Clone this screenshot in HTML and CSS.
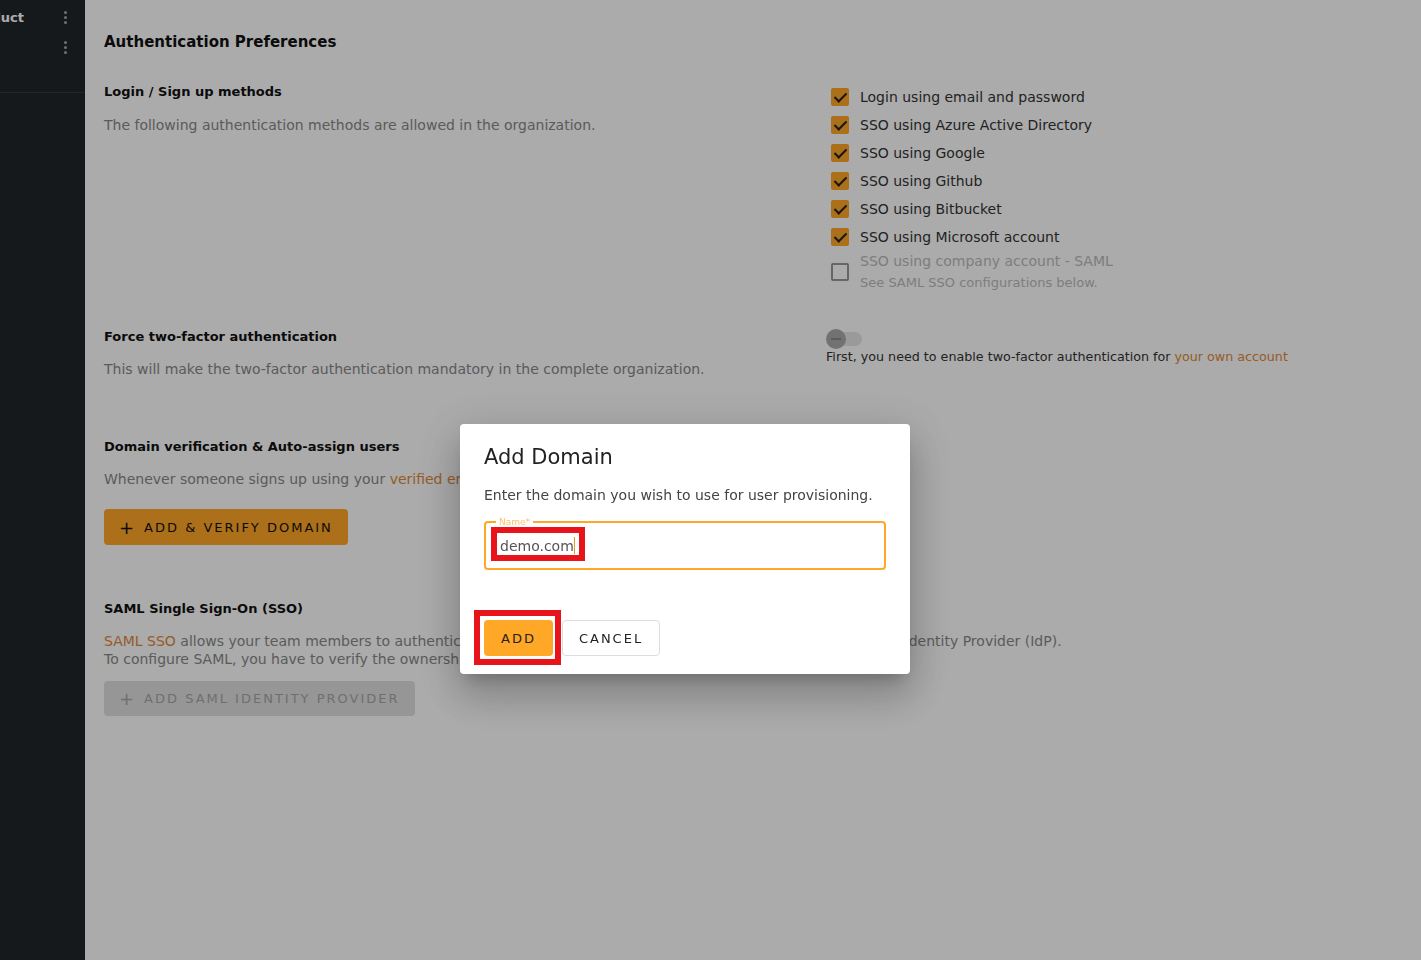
FILE: index.html
```html
<!DOCTYPE html>
<html lang="en">
<head>
  <meta charset="UTF-8">
  <title>Authentication Preferences</title>
  <link rel="stylesheet" href="styles.css">
</head>
<body>
  <div class="app">
    <aside class="sidebar">
      <div class="sidebar-top">
        <div class="sb-row">
          <div class="sb-name"><span>Product</span></div>
          <span class="kebab"><i></i><i></i><i></i></span>
        </div>
        <div class="sb-row">
          <div class="sb-name"></div>
          <span class="kebab"><i></i><i></i><i></i></span>
        </div>
      </div>
    </aside>

    <main class="main">
      <h1>Authentication Preferences</h1>

      <section class="section sec-login">
        <div class="left">
          <h2>Login / Sign up methods</h2>
          <p class="desc">The following authentication methods are allowed in the organization.</p>
        </div>
        <div class="right">
          <ul class="methods">
            <li><span class="cb on"></span>Login using email and password</li>
            <li><span class="cb on"></span>SSO using Azure Active Directory</li>
            <li><span class="cb on"></span>SSO using Google</li>
            <li><span class="cb on"></span>SSO using Github</li>
            <li><span class="cb on"></span>SSO using Bitbucket</li>
            <li><span class="cb on"></span>SSO using Microsoft account</li>
            <li class="disabled">
              <span class="cb"></span>
              <div>
                <div>SSO using company account - SAML</div>
                <div class="hint">See SAML SSO configurations below.</div>
              </div>
            </li>
          </ul>
        </div>
      </section>

      <section class="section sec-2fa">
        <div class="left">
          <h2>Force two-factor authentication</h2>
          <p class="desc">This will make the two-factor authentication mandatory in the complete organization.</p>
        </div>
        <div class="right">
          <span class="switch"><span class="thumb"></span></span>
          <p class="note">First, you need to enable two-factor authentication for <a href="#">your own account</a></p>
        </div>
      </section>

      <section class="section sec-domain">
        <div class="left">
          <h2>Domain verification &amp; Auto-assign users</h2>
          <p class="desc">Whenever someone signs up using your <a href="#">verified emails domain</a>, they are added here.</p>
          <button class="btn btn-primary"><span class="plus">+</span>Add &amp; verify domain</button>
        </div>
      </section>

      <section class="sec-saml">
        <h2>SAML Single Sign-On (SSO)</h2>
        <p class="desc"><a href="#">SAML SSO</a> allows your team members to authenticate into the product through the sign-on of your organization's Identity Provider (IdP).<br>To configure SAML, you have to verify the ownership of your domain first.</p>
        <button class="btn btn-disabled" disabled><span class="plus">+</span>Add SAML identity provider</button>
      </section>
    </main>
  </div>

  <div class="backdrop">
    <div class="dialog">
      <h3>Add Domain</h3>
      <p class="dialog-text">Enter the domain you wish to use for user provisioning.</p>
      <fieldset class="field">
        <legend>Name*</legend>
        <span class="value">demo.com<span class="caret"></span></span>
        <span class="mark mark-input"></span>
      </fieldset>
      <div class="actions">
        <button class="btn btn-add">Add<span class="mark mark-add"></span></button>
        <button class="btn btn-cancel">Cancel</button>
      </div>
    </div>
  </div>
</body>
</html>
```

FILE: styles.css
```css
/* Reset */
* { box-sizing: border-box; margin: 0; padding: 0; }

body {
  font-family: "DejaVu Sans", "Open Sans", sans-serif;
  font-size: 14px;
  color: #222;
  background: #fff;
}

a { color: #e0893a; text-decoration: none; }

.app {
  display: flex;
  min-height: 100vh;
}

/* Sidebar */
.sidebar {
  flex: 0 0 85px;
  width: 85px;
  min-width: 0;
  overflow: hidden;
  background: #222629;
}
.sidebar-top {
  height: 93px;
  padding-top: 2px;
  border-bottom: 1px solid #33373c;
}
.sb-row {
  display: flex;
  align-items: center;
  height: 30px;
}
.sb-name {
  flex: 1;
  min-width: 0;
  display: flex;
  justify-content: flex-end;
  overflow: hidden;
  white-space: nowrap;
  color: #fff;
  font-weight: bold;
  font-size: 13px;
  padding-right: 31px;
}
.kebab {
  flex: 0 0 20px;
  display: flex;
  flex-direction: column;
  align-items: center;
  gap: 2px;
  margin-right: 10px;
}
.kebab i {
  width: 3px;
  height: 3px;
  border-radius: 50%;
  background: #a8a8a8;
}

/* Main */
.main {
  flex: 1;
  padding: 31px 19px;
}
h1 {
  font-size: 15px;
  font-weight: bold;
  line-height: 22px;
  color: #111;
  margin-bottom: 30px;
}
h2 {
  font-size: 13px;
  font-weight: bold;
  line-height: 18px;
  color: #111;
}
.desc {
  margin-top: 15px;
  line-height: 18px;
  color: #888;
}

.section {
  display: grid;
  grid-template-columns: 722px 1fr;
}
.sec-login { margin-bottom: 37px; }
.sec-2fa { margin-bottom: 60px; }
.sec-2fa .desc { margin-top: 14px; }
.sec-domain { margin-bottom: 55px; }
.sec-domain .desc { margin-top: 14px; }
.sec-saml .desc { margin-top: 14px; }

/* Method checkboxes */
.methods {
  list-style: none;
  padding-left: 5px;
  margin-top: 0;
}
.methods li {
  display: flex;
  align-items: center;
  height: 28px;
  color: #333;
}
.methods li.disabled {
  height: auto;
  color: #bbb;
  padding-top: 2px;
}
.methods .hint {
  font-size: 13px;
  line-height: 16px;
  margin-top: 6px;
}
.cb {
  flex: 0 0 18px;
  height: 18px;
  margin-right: 11px;
  border-radius: 2px;
  border: 2px solid #999;
  position: relative;
}
.cb.on {
  background: #ffa726;
  border-color: #ffa726;
}
.cb.on::after {
  content: "";
  position: absolute;
  left: 4px;
  top: 0px;
  width: 5px;
  height: 10px;
  border: solid #222;
  border-width: 0 2px 2px 0;
  transform: rotate(45deg);
}

/* Toggle */
.switch {
  display: block;
  position: relative;
  width: 36px;
  height: 20px;
  margin-top: 1px;
}
.switch::before {
  content: "";
  position: absolute;
  left: 2px;
  right: 0;
  top: 3px;
  height: 14px;
  border-radius: 7px;
  background: #e6e6e6;
}
.thumb {
  position: absolute;
  left: 0;
  top: 0;
  width: 20px;
  height: 20px;
  border-radius: 50%;
  background: #aaa;
}
.thumb::after {
  content: "";
  position: absolute;
  left: 5px;
  right: 5px;
  top: 9px;
  height: 1.5px;
  background: #8a8a8a;
}
.note {
  font-size: 12.7px;
  line-height: 16px;
  color: #333;
}

/* Buttons */
.btn {
  font-family: inherit;
  font-size: 13px;
  letter-spacing: 2px;
  text-transform: uppercase;
  border: none;
  border-radius: 4px;
  height: 36px;
  padding: 0 15px;
  display: inline-flex;
  align-items: center;
  cursor: pointer;
}
.btn .plus {
  font-size: 18px;
  letter-spacing: 0;
  margin-right: 10px;
}
.btn-primary {
  margin-top: 21px;
  background: #ffa726;
  color: #111;
}
.btn-disabled {
  margin-top: 13px;
  height: 35px;
  background: #e0e0e0;
  color: #a6a6a6;
}

/* Dialog */
.backdrop {
  position: fixed;
  inset: 0;
  background: rgba(0, 0, 0, 0.33);
}
.dialog {
  position: absolute;
  left: 460px;
  top: 424px;
  width: 450px;
  height: 250px;
  background: #fff;
  border-radius: 4px;
  box-shadow: 0 11px 15px -7px rgba(0,0,0,.2), 0 24px 38px 3px rgba(0,0,0,.14), 0 9px 46px 8px rgba(0,0,0,.12);
  padding: 19px 24px 18px;
}
.dialog h3 {
  font-size: 21px;
  font-weight: normal;
  line-height: 28px;
  color: #222;
}
.dialog-text {
  margin-top: 14px;
  line-height: 20px;
  color: #444;
}
.field {
  position: relative;
  margin-top: 12px;
  height: 53px;
  border: 2px solid #ffa726;
  border-radius: 4px;
  padding: 0 14px;
}
.field legend {
  font-size: 9px;
  color: #ffc266;
  padding: 0 3px;
  margin-left: -4px;
  line-height: 10px;
}
.field .value {
  display: inline-flex;
  align-items: center;
  margin-top: 10px;
  font-size: 14px;
  color: #555;
}
.caret {
  display: inline-block;
  width: 1px;
  height: 17px;
  background: #e0962a;
}
.mark {
  position: absolute;
  border: 6px solid #e8141c;
  pointer-events: none;
}
.mark-input {
  left: 5px;
  top: 0;
  width: 94px;
  height: 34px;
}

.actions {
  display: flex;
  gap: 9px;
  margin-top: 50px;
}
.btn-add {
  position: relative;
  background: #ffa726;
  color: #222;
  padding: 0 17px;
}
.mark-add {
  left: -10px;
  top: -10px;
  right: -8px;
  bottom: -9px;
}
.btn-cancel {
  background: #fff;
  color: #222;
  border: 1px solid #ddd;
  padding: 0 16px;
}
```
